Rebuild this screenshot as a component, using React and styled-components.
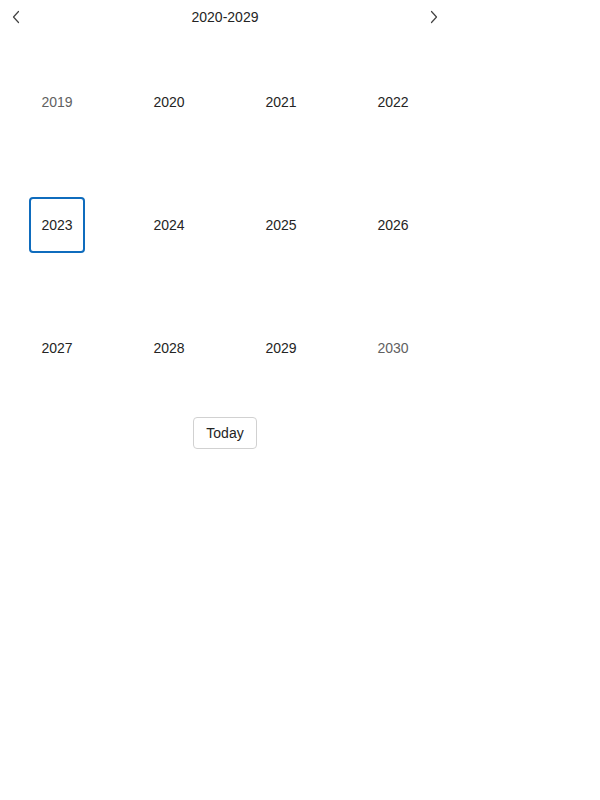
import React from "react";
import styled, { createGlobalStyle } from "styled-components";

const Global = createGlobalStyle`
  body { margin: 0; background: #fff; font-family: "Liberation Sans", Arial, sans-serif; }
`;

const Wrap = styled.div`
  width: 450px;
  display: flex;
  flex-direction: column;
  align-items: center;
`;

const Header = styled.div`
  width: 450px;
  height: 34px;
  margin-bottom: 6px;
  display: flex;
  align-items: center;
  justify-content: space-between;
  padding: 0 8px;
  box-sizing: border-box;
`;

const NavBtn = styled.button`
  width: 16px;
  height: 16px;
  padding: 0;
  border: none;
  background: none;
  display: flex;
  align-items: center;
  justify-content: center;
  color: #424242;
`;

const Title = styled.div`
  font-size: 14px;
  color: #242424;
`;

const Grid = styled.div`
  display: grid;
  grid-template-columns: repeat(4, 112px);
  grid-auto-rows: 123px;
`;

const Cell = styled.div`
  display: flex;
  align-items: center;
  justify-content: center;
`;

const Year = styled.div`
  width: 56px;
  height: 56px;
  box-sizing: border-box;
  display: flex;
  align-items: center;
  justify-content: center;
  font-size: 14px;
  color: ${(p) => (p.$out ? "#616161" : "#242424")};
  border: 2px solid ${(p) => (p.$selected ? "#0f6cbd" : "transparent")};
  border-radius: 4px;
`;

const Today = styled.button`
  margin-top: 8px;
  height: 32px;
  padding: 0 12px;
  font-family: "Liberation Sans", Arial, sans-serif;
  font-size: 14px;
  color: #242424;
  background: #fff;
  border: 1px solid #d1d1d1;
  border-radius: 4px;
`;

const Chevron = ({ dir }) => (
  <svg width="8" height="14" viewBox="0 0 8 14" fill="none">
    <path
      d={dir === "left" ? "M6.5 1.5 L1.5 7 L6.5 12.5" : "M1.5 1.5 L6.5 7 L1.5 12.5"}
      stroke="currentColor"
      strokeWidth="1.2"
      strokeLinecap="round"
      strokeLinejoin="round"
    />
  </svg>
);

const years = [2019, 2020, 2021, 2022, 2023, 2024, 2025, 2026, 2027, 2028, 2029, 2030];

export default function App() {
  return (
    <>
      <Global />
      <Wrap>
        <Header>
          <NavBtn aria-label="Previous">
            <Chevron dir="left" />
          </NavBtn>
          <Title>2020-2029</Title>
          <NavBtn aria-label="Next">
            <Chevron dir="right" />
          </NavBtn>
        </Header>
        <Grid>
          {years.map((y) => (
            <Cell key={y}>
              <Year $out={y < 2020 || y > 2029} $selected={y === 2023}>
                {y}
              </Year>
            </Cell>
          ))}
        </Grid>
        <Today>Today</Today>
      </Wrap>
    </>
  );
}
